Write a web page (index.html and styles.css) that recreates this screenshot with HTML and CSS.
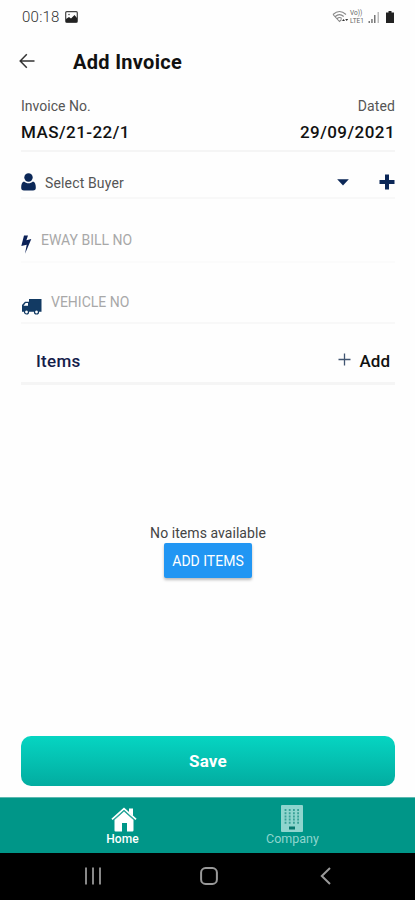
FILE: index.html
```html
<!DOCTYPE html>
<html lang="en">
<head>
<meta charset="utf-8">
<meta name="viewport" content="width=device-width, initial-scale=1">
<title>Add Invoice</title>
<link rel="stylesheet" href="styles.css">
</head>
<body>
<div class="screen">
  <div class="status">
    <span class="clock">00:18</span>
    <svg class="photo" width="13" height="12" viewBox="0 0 13 12"><rect x=".7" y=".7" width="11.6" height="10.6" rx="1" fill="#fff" stroke="#444" stroke-width="1.200"/><path d="M1 10V8l3-2 2 1.500L9.500 4 12 7v4H1z" fill="#222"/><circle cx="4" cy="3.500" r=".8" fill="#555"/></svg>
    <div class="signals">
      <svg width="17" height="14" viewBox="0 0 17 14" fill="none" stroke="#888" stroke-width="1.100"><path d="M1 4.500Q7.500-1.500 14 4.500M3.300 6.500q4.200-3.800 8.400 0M5.300 8.500q2.200-2 4.400 0M1 4.500l6.500 7 2-2"/><path d="M10 11l1.500-2 1.500 2zM13.200 9l1.500 2 1.500-2z" fill="#333" stroke="none"/></svg>
      <span class="volte"><span>Vo))</span><span>LTE1</span></span>
      <svg width="12" height="12" viewBox="0 0 12 12"><path d="M.5 12v-2H2v2zM3.200 12V8h1.500v4zM6 12V4h1.500v8z" fill="#777"/><path d="M9.500 12V1H11v11z" fill="#bbb"/></svg>
      <svg class="battery" width="8" height="12" viewBox="0 0 8 12"><path d="M2.500 0h3v1.500H8V12H0V1.500h2.500z" fill="#222"/></svg>
    </div>
  </div>
  <header class="header">
    <svg width="16" height="16" viewBox="0 0 16 16" fill="none" stroke="#333" stroke-width="1.500"><path d="M15.500 8H1.200M7.800 1.200L1.200 8l6.600 6.800"/></svg>
    <h1>Add Invoice</h1>
  </header>
  <main class="form">
    <section class="summary">
      <div><p class="label">Invoice No.</p><p class="value">MAS/21-22/1</p></div>
      <div class="right"><p class="label dated">Dated</p><p class="value date">29/09/2021</p></div>
    </section>
    <div class="row buyer">
      <svg width="15" height="18" viewBox="0 0 15 18" fill="#0b2757"><circle cx="7.500" cy="4.500" r="4.200"/><path d="M3 8.500C.8 9.200.2 11.500.2 14.500.2 16.800 1 17.500 3 17.500h9c2 0 2.800-.7 2.800-3 0-3-.6-5.300-2.800-6-2.600 2.400-6.400 2.400-9 0z"/></svg>
      <span class="buyer-name">Select Buyer</span>
      <svg class="caret" width="12" height="7" viewBox="0 0 12 7"><path d="M.2.300h11.600L6 6.500z" fill="#0b2757"/></svg>
      <svg width="16" height="16" viewBox="0 0 16 16"><path d="M6 .500h4V6h5.500v4H10v5.500H6V10H.5V6H6z" fill="#0b2757"/></svg>
    </div>
    <div class="row eway">
      <svg width="11" height="19" viewBox="0 0 11 19"><path d="M3 .500h4L5.400 5.200l4.900-1.100L4 18.700l1.700-9L.3 11z" fill="#0b2157"/></svg>
      <span class="placeholder">EWAY BILL NO</span>
    </div>
    <div class="row vehicle">
      <svg width="21" height="17" viewBox="0 0 21 17"><path d="M8 1h12.500v12.800H1V7l3-3.200h4z" fill="#123a63"/><path d="M2.500 7.800L4.700 5H7v2.800z" fill="#fff"/><circle cx="5.500" cy="14" r="2" fill="#fff" stroke="#123a63" stroke-width="1.200"/><circle cx="15.500" cy="14" r="2" fill="#fff" stroke="#123a63" stroke-width="1.200"/></svg>
      <span class="placeholder">VEHICLE NO</span>
    </div>
    <div class="row items">
      <h2>Items</h2>
      <svg class="thin-plus" width="13" height="13" viewBox="0 0 13 13"><path d="M6.500.500v12M.5 6.500h12" stroke="#405571" stroke-width="1.300"/></svg>
      <span class="add">Add</span>
    </div>
    <section class="empty">
      <p>No items available</p>
      <button class="add-items">ADD ITEMS</button>
    </section>
    <button class="save">Save</button>
  </main>
  <nav class="tabs">
    <div class="tab home">
      <svg width="26" height="25" viewBox="0 0 26 25"><path d="M3.500 13L13 4.500l9.500 8.500v10.300a1.200 1.200 0 0 1-1.200 1.200H16V16h-5v8.500H4.500a1 1 0 0 1-1-1z" fill="#fff"/><path d="M1 12.300L13 1.700l12 10.600" fill="none" stroke="#fff" stroke-width="1.800"/><path d="M18 1.500h4v7.600l-4-3.500z" fill="#fff"/><path d="M2.800 13L13 3.900 23.200 13" fill="none" stroke="#5cb9b0" stroke-width=".6"/></svg>
      <span>Home</span>
    </div>
    <div class="tab company">
      <svg width="22" height="27" viewBox="0 0 22 27"><rect width="22" height="27" rx="1" fill="#8fd5ce"/><path d="M4.500 4v16M8.700 4v16M12.900 4v16M17.100 4v16" stroke="#38a197" stroke-width="1.800" stroke-dasharray="2 1.200"/><rect x="8" y="21.500" width="6" height="3" fill="#08796f"/></svg>
      <span>Company</span>
    </div>
  </nav>
  <div class="system">
    <svg width="18" height="18" viewBox="0 0 18 18"><path d="M2 .500v17M9 .500v17M16 .500v17" stroke="#888" stroke-width="2"/></svg>
    <svg class="home-key" width="18" height="18" viewBox="0 0 18 18"><rect x="1.100" y="1.100" width="15.800" height="15.800" rx="4.500" fill="none" stroke="#999" stroke-width="2"/></svg>
    <svg width="11" height="18" viewBox="0 0 11 18"><path d="M10 1L1.800 9l8.200 8" fill="none" stroke="#999" stroke-width="2"/></svg>
  </div>
</div>
</body>
</html>
```

FILE: styles.css
```css
* { box-sizing: border-box; }
body { margin: 0; background: #fefefe; color: #111; font-family: Roboto, "Liberation Sans", sans-serif; }
h1, h2, p { margin: 0; }
svg { display: block; flex: none; }
button { border: 0; padding: 0; font-family: inherit; }
.screen { height: 900px; display: flex; flex-direction: column; overflow: hidden; }
.status { height: 34px; padding: 0 21px 0 22px; display: flex; align-items: center; }
.clock { width: 43px; font-size: 15px; font-weight: 300; color: #333; letter-spacing: .25px; }
.signals { margin-left: auto; display: flex; align-items: center; gap: 1px; }
.volte { width: 17px; display: flex; flex-direction: column; font-size: 6.5px; line-height: 8px; margin: -1px 0; color: #666; }
.battery { margin-left: 5px; }
.header { height: 54px; padding: 0 19px; display: flex; align-items: center; gap: 38px; }
h1 { font-size: 20px; font-weight: 700; line-height: 24px; letter-spacing: .3px; padding-top: 1px; }
.form { flex: 1; padding: 0 20px 11px 21px; display: flex; flex-direction: column; }
.summary { height: 64px; padding-top: 9px; display: flex; justify-content: space-between; border-bottom: 2px solid #f5f5f5; }
.label { font-size: 14px; line-height: 18px; color: #555; letter-spacing: .02px; }
.dated { letter-spacing: .1px; }
.value { margin-top: 7px; font-size: 17px; line-height: 20px; font-weight: 500; letter-spacing: .45px; }
.right { text-align: right; }
.row { display: flex; border-bottom: 2px solid #f8f8f8; }
.buyer { height: 47px; padding-top: 15px; align-items: center; }
.buyer-name { flex: 1; padding: 2px 0 0 9px; font-size: 14px; color: #555; letter-spacing: .15px; }
.caret { margin-right: 30px; }
.eway { height: 64px; padding-top: 36px; gap: 9px; border-color: #fbfbfb; }
.placeholder { font-size: 14px; font-weight: 400; line-height: 18px; color: #a8a8a8; margin-top: -4px; }
.vehicle { height: 61px; padding-top: 35px; gap: 9px; }
.vehicle .placeholder { margin-top: -5px; }
.items { height: 61px; padding: 0 5px 11px 15px; align-items: flex-end; border-bottom: 3px solid #f5f5f5; }
h2, .add { font-size: 17px; line-height: 20px; font-weight: 500; }
h2 { color: #14204a; letter-spacing: .3px; }
.thin-plus { margin: 0 9px 5px auto; }
.empty { height: 194px; margin-top: auto; margin-bottom: 18px; display: flex; flex-direction: column; align-items: center; font-size: 14px; line-height: 19px; color: #444; letter-spacing: .06px; }
.add-items { width: 88px; height: 35px; flex: none; border-radius: 2px; background: #2196f3; color: #fff; font-size: 14px; box-shadow: 0 2px 3px #bbb; }
.save { height: 50px; flex: none; border-radius: 10px; background: linear-gradient(#06d5c2, #02aca0); color: #fff; font-size: 17px; font-weight: 700; letter-spacing: .2px; }
.tabs { height: 56px; background: #009688; border-top: 1px solid #5cb9b0; display: flex; }
.tab { width: 169px; display: flex; flex-direction: column; align-items: center; font-size: 12.5px; line-height: 14px; }
.home { margin-left: 39px; padding-top: 9px; color: #fff; font-size: 12px; font-weight: 500; }
.home span { margin-right: 2px; letter-spacing: .1px; }
.company { padding-top: 7px; color: #8fd5ce; }
.company svg { margin-right: 2px; }
.system { height: 47px; padding: 0 84px; display: flex; align-items: center; justify-content: space-between; background: #000; }
.system svg { margin-top: -1px; }
.home-key { margin-right: 4px; }
```
